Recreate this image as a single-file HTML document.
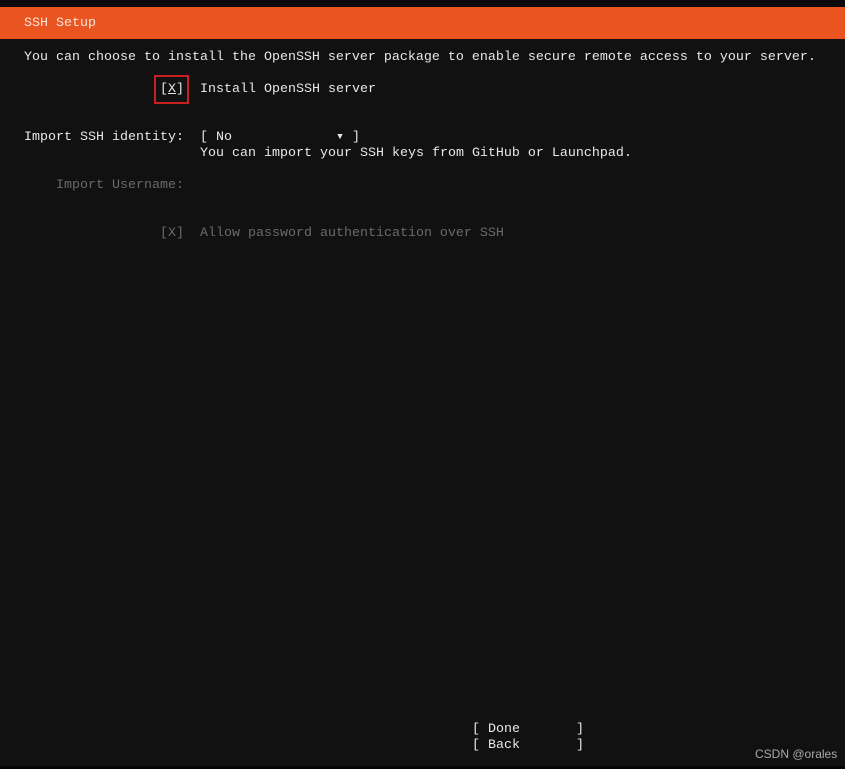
<!DOCTYPE html>
<html><head><style>
body{margin:0;width:845px;height:769px;background:#111111;overflow:hidden;position:relative;font-family:"Liberation Mono",monospace;font-size:13.33px;color:#e8e8e8}
.t{position:absolute;white-space:pre;line-height:16px}
.g{color:#6a6a6a}
</style></head><body>
<div style="position:absolute;left:0;top:0;width:845px;height:7px;background:#0a0a0a"></div>
<div style="position:absolute;left:0;top:7px;width:845px;height:32px;background:#e95420"></div>
<div class="t" style="left:24px;top:16px;color:#fbe3d8">SSH Setup</div>
<div class="t" style="left:24px;top:50px">You can choose to install the OpenSSH server package to enable secure remote access to your server.</div>
<div style="position:absolute;left:154px;top:75px;width:31px;height:25px;border:2px solid #c82020"></div>
<div class="t" style="left:160px;top:82px">[<u>X</u>]</div>
<div class="t" style="left:200px;top:82px">Install OpenSSH server</div>
<div class="t" style="left:24px;top:130px">Import SSH identity:</div>
<div class="t" style="left:200px;top:130px">[ No             ▾ ]</div>
<div class="t" style="left:200px;top:146px">You can import your SSH keys from GitHub or Launchpad.</div>
<div class="t g" style="left:56px;top:178px">Import Username:</div>
<div class="t g" style="left:160px;top:226px">[X]  Allow password authentication over SSH</div>
<div class="t" style="left:472px;top:722px">[ Done       ]</div>
<div class="t" style="left:472px;top:738px">[ Back       ]</div>
<div class="t" style="left:755px;top:746px;font-family:'Liberation Sans',sans-serif;font-size:12px;color:#aaaaaa">CSDN @orales</div>
<div style="position:absolute;left:0;top:766px;width:845px;height:3px;background:#050505"></div>
</body></html>
